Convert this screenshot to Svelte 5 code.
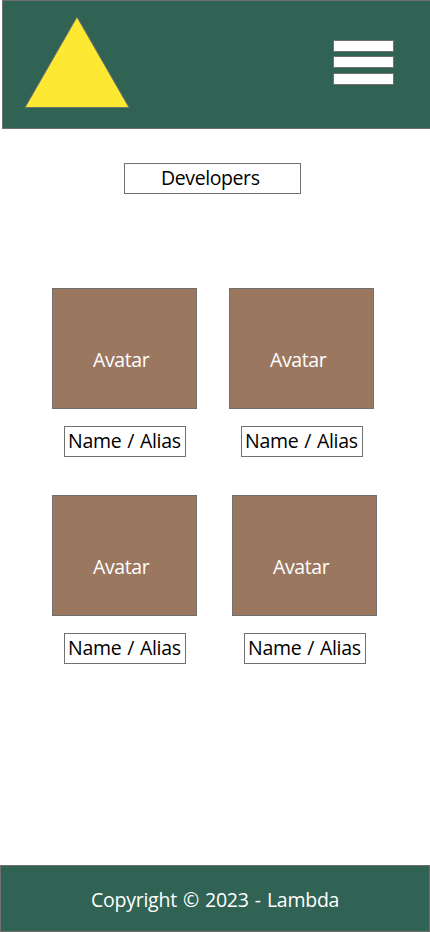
<script>
  const rows = [
    { gap: 32, people: ['Name / Alias', 'Name / Alias'] },
    { gap: 35, people: ['Name / Alias', 'Name / Alias'] }
  ];
</script>

<div class="page">
  <header>
    <svg class="logo" width="108" height="95" viewBox="0 0 108 95" aria-label="Logo">
      <path d="M54 3 L106 93.5 H2 Z" fill="#fde932" stroke="#707070" />
    </svg>
    <button class="menu" aria-label="Menu">
      <span></span><span></span><span></span>
    </button>
  </header>

  <main>
    <h1><span>Developers</span></h1>
    <section>
      {#each rows as row}
        <div class="row" style="gap: {row.gap}px">
          {#each row.people as name}
            <article>
              <div class="avatar"><span>Avatar</span></div>
              <div class="name"><span>{name}</span></div>
            </article>
          {/each}
        </div>
      {/each}
    </section>
  </main>

  <footer><span>Copyright © 2023 - Lambda</span></footer>
</div>

<style>
  :global(body) { margin: 0; background: #fff; }
  .page {
    width: 430px;
    height: 932px;
    overflow: hidden;
    display: flex;
    flex-direction: column;
    font: 19.5px/27px "Segoe UI", "Open Sans", "Noto Sans", sans-serif;
    letter-spacing: -0.4px;
    color: #000;
  }
  .page * { box-sizing: border-box; }
  span { white-space: nowrap; }
  header {
    flex: none;
    height: 129px;
    margin-left: 2px;
    display: flex;
    justify-content: space-between;
    align-items: flex-start;
    padding: 13px 36px 0 20px;
    background: #306354;
    border: 1px solid #707070;
    border-right: 0;
  }
  .logo { display: block; }
  .menu {
    display: flex;
    flex-direction: column;
    width: 61px;
    margin-top: 26px;
    padding: 0;
    border: 0;
    background: none;
  }
  .menu span {
    height: 12px;
    margin-bottom: 4px;
    background: #fff;
    border: 1px solid #707070;
  }
  .menu span:nth-child(2) { margin-bottom: 5px; }
  .menu span:last-child { margin-bottom: 0; }
  main { flex: 1; }
  h1 {
    width: 177px;
    height: 31px;
    margin: 34px 0 0 124px;
    padding: 0 0 0 36px;
    border: 1px solid #707070;
    font: inherit;
  }
  section {
    display: flex;
    flex-direction: column;
    gap: 38px;
    margin: 94px 0 0 52px;
  }
  .row { display: flex; }
  .avatar {
    width: 145px;
    height: 121px;
    padding: 57px 0 0 40px;
    background: #9b7760;
    border: 1px solid #707070;
    color: #fff;
  }
  .name {
    width: 122px;
    height: 31px;
    margin: 17px 0 0 12px;
    padding: 0 0 0 3px;
    border: 1px solid #707070;
    letter-spacing: -0.3px;
    word-spacing: 1.1px;
  }
  footer {
    flex: none;
    height: 67px;
    padding: 20px 0 0 90px;
    background: #306354;
    border: 1px solid #707070;
    color: #fff;
    letter-spacing: -0.25px;
    word-spacing: 1.3px;
  }
</style>
